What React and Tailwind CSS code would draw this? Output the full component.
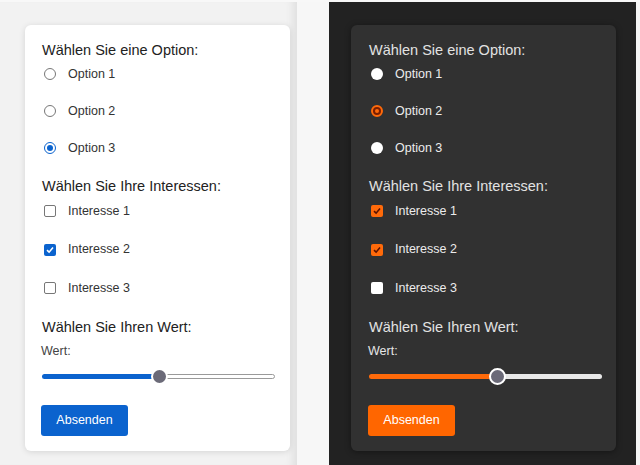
import React from "react";

const themes = {
  light: {
    card: "bg-white shadow-[0_1px_6px_rgba(0,0,0,0.12)]",
    heading: "text-[#222]",
    label: "text-[#333]",
    sub: "text-[#444]",
    fill: "bg-[#0b63ce]",
    rest: "bg-white border border-[#9a9a9a]",
    button: "bg-[#0b63ce] text-white",
  },
  dark: {
    card: "bg-[#313131] shadow-[0_1px_6px_rgba(0,0,0,0.4)]",
    heading: "text-[#e2e2e2]",
    label: "text-[#ececec]",
    sub: "text-[#e6e6e6]",
    fill: "bg-[#ff6a0a]",
    rest: "bg-[#e8e8e8]",
    button: "bg-[#ff6600] text-white",
  },
};

function Radio({ dark, checked }) {
  if (dark) {
    return checked ? (
      <span className="w-3 h-3 rounded-full border-2 border-[#ff6a0a] bg-[#7a1e00] flex items-center justify-center">
        <span className="w-[4px] h-[4px] rounded-full bg-[#ff6a0a]" />
      </span>
    ) : (
      <span className="w-3 h-3 rounded-full bg-white" />
    );
  }
  return checked ? (
    <span className="w-3 h-3 rounded-full border border-[#0b63ce] bg-white flex items-center justify-center">
      <span className="w-[6px] h-[6px] rounded-full bg-[#0b63ce]" />
    </span>
  ) : (
    <span className="w-3 h-3 rounded-full border border-[#777] bg-white" />
  );
}

function Check({ dark, checked }) {
  if (checked) {
    return (
      <span className={`w-3 h-3 rounded-[2px] flex items-center justify-center ${dark ? "bg-[#ff6a0a]" : "bg-[#0b63ce]"}`}>
        <svg width="10" height="10" viewBox="0 0 10 10">
          <path d="M2 5.2 L4.1 7.2 L8 2.6" fill="none" stroke={dark ? "#5a1200" : "#fff"} strokeWidth="1.6" />
        </svg>
      </span>
    );
  }
  return dark ? (
    <span className="w-3 h-3 rounded-[2px] bg-white" />
  ) : (
    <span className="w-3 h-3 rounded-[2px] border border-[#777] bg-white" />
  );
}

function Panel({ dark, radio, checks, value }) {
  const t = dark ? themes.dark : themes.light;
  return (
    <div className={`w-[265px] h-[426px] rounded-md pt-4 ${dark ? "pl-[18px] pr-[14px]" : "pl-[17px] pr-[15px]"} ${t.card}`}>
      <h2 className={`text-[14.5px] leading-[18px] ${t.heading}`}>Wählen Sie eine Option:</h2>
      <div className="mt-[5px] flex flex-col gap-[17px]">
        {[1, 2, 3].map((n) => (
          <div key={n} className="h-5 flex items-center pl-[2px] gap-3">
            <Radio dark={dark} checked={radio === n} />
            <span className={`text-[12.5px] ${t.label}`}>Option {n}</span>
          </div>
        ))}
      </div>
      <h2 className={`mt-[19px] text-[14.5px] leading-[18px] ${t.heading}`}>Wählen Sie Ihre Interessen:</h2>
      <div className="mt-[6px] flex flex-col gap-[18.5px]">
        {[1, 2, 3].map((n) => (
          <div key={n} className="h-5 flex items-center pl-[2px] gap-3">
            <Check dark={dark} checked={checks.includes(n)} />
            <span className={`text-[12.5px] ${t.label}`}>Interesse {n}</span>
          </div>
        ))}
      </div>
      <h2 className={`mt-[20px] text-[14.5px] leading-[18px] ${t.heading}`}>Wählen Sie Ihren Wert:</h2>
      <p className={`mt-[7px] -ml-[1px] text-[12.5px] leading-4 ${t.sub}`}>Wert:</p>
      <div className="mt-[9px] h-4 w-[233px] relative flex items-center">
        <div className="flex w-full h-[5px]">
          <div className={`h-full rounded-l-full ${t.fill}`} style={{ width: `${value}%` }} />
          <div className={`h-full flex-1 rounded-r-full ${t.rest}`} />
        </div>
        <span
          className="absolute w-[17px] h-[17px] -ml-[8px] rounded-full bg-[#6b6a78] border-2 border-white"
          style={{ left: `${value}%` }}
        />
      </div>
      <button className={`mt-[21px] -ml-[1px] h-[31px] w-[87px] rounded-[3px] text-[12.5px] ${t.button}`}>Absenden</button>
    </div>
  );
}

export default function App() {
  return (
    <div className="w-[640px] h-[465px] flex bg-[#f8f8f8] pt-[2px] overflow-hidden" style={{ fontFamily: '"Liberation Sans", Arial, sans-serif' }}>
      <div className="w-[297px] h-full bg-[#f2f2f2] pl-[25px] pt-[23px] shadow-[inset_-10px_0_8px_-6px_rgba(0,0,0,0.08)]">
        <Panel radio={3} checks={[2]} value={50} />
      </div>
      <div className="w-[32px] h-full bg-[#f7f7f7]" />
      <div className="w-[307px] h-full bg-[#222] pl-[22px] pt-[23px]">
        <Panel dark radio={2} checks={[1, 2]} value={55} />
      </div>
      <div className="w-[4px] h-full bg-[#f5f5f5]" />
    </div>
  );
}
